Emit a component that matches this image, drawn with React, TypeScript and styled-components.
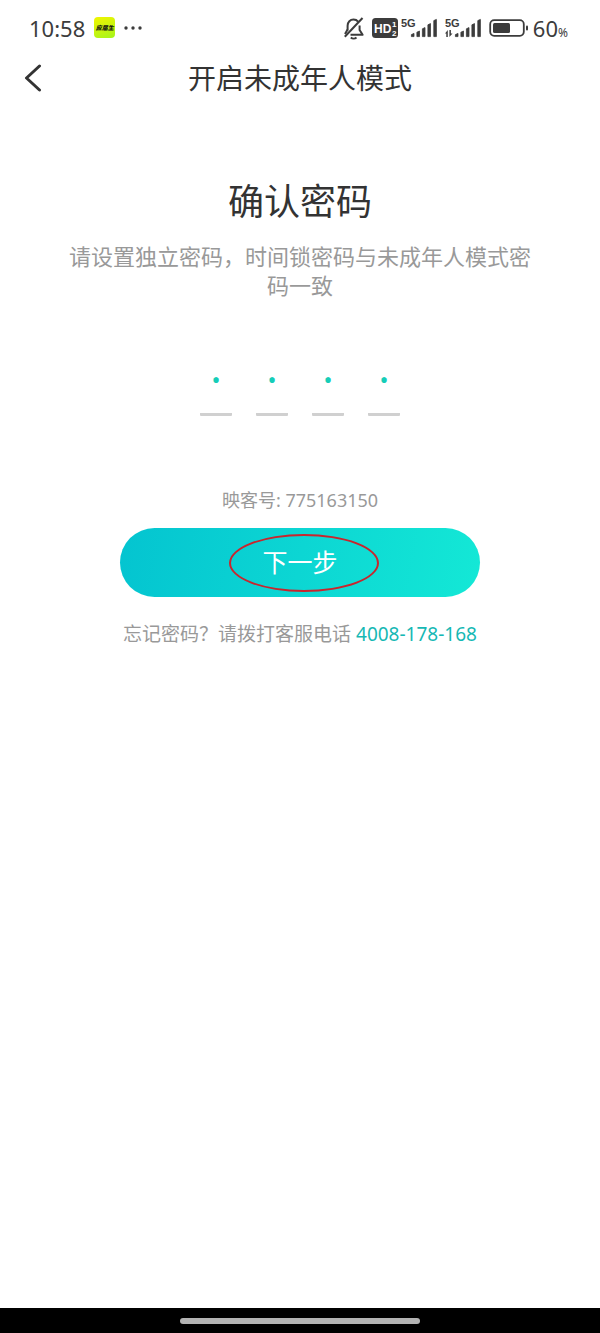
import React, { useState } from "react";
import styled, { createGlobalStyle } from "styled-components";

const GlobalStyle = createGlobalStyle`
  * { box-sizing: border-box; }
  body {
    margin: 0;
    background: #fff;
    color: #333;
    font-family: "Noto Sans", "Noto Sans CJK SC", sans-serif;
  }
`;

const Screen = styled.div`
  display: flex;
  flex-direction: column;
  min-height: 100vh;
`;

const StatusBar = styled.div`
  display: flex;
  align-items: center;
  justify-content: space-between;
  height: 55px;
  padding: 0 32px 0 29px;
  color: #3c3c3c;
`;

const StatusGroup = styled.div<{ $gap: number }>`
  display: flex;
  align-items: center;
  gap: ${(p) => p.$gap}px;

  svg { display: block; }
`;

const StatusText = styled.span`
  font-size: 22px;
  line-height: 24px;
`;

const Percent = styled.small`
  font-size: 12px;
  line-height: 12px;
`;

const AppBadge = styled.span`
  display: flex;
  align-items: center;
  justify-content: center;
  width: 21px;
  height: 21px;
  border-radius: 4px;
  background: linear-gradient(160deg, #f2f500, #a4f51c);
  color: #111;
  font-size: 6px;
  font-weight: 900;
  font-style: italic;
  line-height: 8px;
  white-space: nowrap;
`;

const NavBar = styled.header`
  display: grid;
  grid-template-columns: 64px 1fr 64px;
  align-items: center;
  height: 45px;
`;

const BackButton = styled.button`
  display: flex;
  align-items: center;
  height: 44px;
  padding: 0 0 0 24px;
  border: 0;
  background: none;
  color: #333;
`;

const NavTitle = styled.h1`
  margin: 0;
  font-size: 28px;
  font-weight: 400;
  line-height: 40px;
  text-align: center;
`;

const Content = styled.main`
  display: flex;
  flex: 1;
  flex-direction: column;
  align-items: center;
  padding: 78px 60px 0;
  text-align: center;
`;

const Heading = styled.h2`
  margin: 0;
  font-size: 36px;
  font-weight: 400;
  line-height: 48px;
`;

const Description = styled.p`
  margin: 16px 0 0;
  color: #999;
  font-size: 22px;
  line-height: 29px;
`;

const CodeRow = styled.div`
  display: flex;
  gap: 24px;
  margin-top: 60px;
`;

const CodeInput = styled.input`
  width: 32px;
  height: 56px;
  padding: 0 0 14px;
  border: 0;
  border-bottom: 3px solid #d0d0d0;
  border-radius: 1px;
  outline: 0;
  background: none;
  color: #16cdb8;
  font-family: "Noto Sans", sans-serif;
  font-size: 24px;
  text-align: center;
`;

const AccountId = styled.p`
  margin: 72px 0 0;
  color: #999;
  font-size: 18px;
  line-height: 24px;
`;

const Action = styled.div`
  position: relative;
  width: 75%;
  margin-top: 16px;
`;

const NextButton = styled.button`
  display: block;
  width: 100%;
  height: 69px;
  padding: 0 0 4px;
  border: 0;
  border-radius: 35px;
  background: linear-gradient(100deg, #04c4d0, #14e8d6);
  color: #fff;
  font-family: inherit;
  font-size: 25px;
`;

const Marker = styled.span`
  position: absolute;
  inset: 6px 101px 5px 109px;
  border: 2px solid #c9252d;
  border-radius: 50%;
  pointer-events: none;
`;

const Help = styled.p`
  margin: 25px 0 0;
  color: #999;
  font-size: 19px;
  line-height: 24px;
  white-space: nowrap;
`;

const PhoneLink = styled.a`
  color: #16b8b4;
  text-decoration: none;
`;

const GestureBar = styled.footer`
  display: flex;
  align-items: center;
  justify-content: center;
  height: 25px;
  background: #000;
`;

const GestureHandle = styled.span`
  width: 40%;
  height: 6px;
  border-radius: 3px;
  background: #b3b3b3;
`;

const MoreDots = () => (
  <svg width="18" height="4" viewBox="0 0 18 4" fill="currentColor" aria-hidden="true">
    <circle cx="2" cy="2" r="1.7" />
    <circle cx="9" cy="2" r="1.7" />
    <circle cx="16" cy="2" r="1.7" />
  </svg>
);

const MutedBell = () => (
  <svg width="22" height="24" viewBox="0 0 22 24" fill="none" stroke="currentColor" strokeWidth="2" aria-hidden="true">
    <path d="M4.6 14.5V9.8C4.6 6 7.2 3.6 10.5 3.6c1.9 0 3.5.7 4.6 2M16.6 9.5v4.5l3 4.8H7.5" strokeLinejoin="round" />
    <path d="M4.6 13.5L2 18" />
    <path d="M19.5 2L1.8 20.8" />
    <path d="M7.8 21.6c1.5 1.3 4.2 1.3 5.7 0" />
  </svg>
);

const HdBadge = () => (
  <svg width="26" height="20" viewBox="0 0 26 20" aria-hidden="true">
    <rect width="26" height="20" rx="3.5" fill="currentColor" />
    <g fill="#fff" fontFamily="Liberation Sans, sans-serif" fontWeight="700">
      <text x="2" y="14.5" fontSize="12">HD</text>
      <text x="20" y="9" fontSize="8">1</text>
      <text x="20" y="18" fontSize="8">2</text>
    </g>
  </svg>
);

const Signal = ({ data }: { data?: boolean }) => (
  <svg width="37" height="24" viewBox="0 0 37 24" fill="currentColor" aria-hidden="true">
    <text x="0" y="11" fontSize="11" fontWeight="700" fontFamily="Liberation Sans, sans-serif">5G</text>
    {data && <path d="M0 17.6L2.8 14v7H1.3v-3.4zM4.4 14h1.5v3.4h1.6L4.4 21z" />}
    <g strokeWidth="0.8" stroke="currentColor" strokeLinejoin="round">
      <path d="M10.4 18.6l2.6-1.2v3.2h-2.6zM15.9 16.2l2.6-1.2v5.6h-2.6zM21.4 12.8l2.6-1.2v9h-2.6zM26.9 8.8l2.6-1.2v13h-2.6zM32.8 4.6l2.6-1.2v17.2h-2.6z" />
    </g>
  </svg>
);

const Battery = () => (
  <svg width="40" height="18" viewBox="0 0 40 18" aria-hidden="true">
    <rect x="1.2" y="1.2" width="33.6" height="15.6" rx="4" fill="none" stroke="currentColor" strokeWidth="1.8" />
    <rect x="4" y="4" width="17" height="10" rx="1.5" fill="currentColor" />
    <rect x="37" y="6.5" width="2" height="5" rx="1" fill="currentColor" />
  </svg>
);

export default function App() {
  const [code, setCode] = useState(["1", "2", "3", "4"]);

  const update = (index: number, value: string) =>
    setCode(code.map((digit, i) => (i === index ? value : digit)));

  return (
    <>
      <GlobalStyle />
      <Screen>
        <StatusBar>
          <StatusGroup $gap={9}>
            <StatusText>10:58</StatusText>
            <AppBadge>应届生</AppBadge>
            <MoreDots />
          </StatusGroup>
          <StatusGroup $gap={7}>
            <MutedBell />
            <StatusGroup $gap={3}>
              <HdBadge />
              <Signal />
            </StatusGroup>
            <Signal data />
            <StatusGroup $gap={4}>
              <Battery />
              <StatusText>
                60<Percent>%</Percent>
              </StatusText>
            </StatusGroup>
          </StatusGroup>
        </StatusBar>

        <NavBar>
          <BackButton type="button" aria-label="返回">
            <svg width="18" height="28" viewBox="0 0 18 28" fill="none" stroke="currentColor" strokeWidth="3" strokeLinecap="round" strokeLinejoin="round">
              <path d="M15.5 2L2.5 14l13 12" />
            </svg>
          </BackButton>
          <NavTitle>开启未成年人模式</NavTitle>
        </NavBar>

        <Content>
          <Heading>确认密码</Heading>
          <Description>请设置独立密码，时间锁密码与未成年人模式密码一致</Description>

          <CodeRow>
            {code.map((digit, i) => (
              <CodeInput
                key={i}
                type="password"
                inputMode="numeric"
                maxLength={1}
                aria-label={`密码第${i + 1}位`}
                value={digit}
                onChange={(e) => update(i, e.target.value)}
              />
            ))}
          </CodeRow>

          <AccountId>映客号: 775163150</AccountId>
          <Action>
            <NextButton type="button">下一步</NextButton>
            <Marker />
          </Action>
          <Help>
            忘记密码？请拨打客服电话 <PhoneLink href="tel:4008178168">4008-178-168</PhoneLink>
          </Help>
        </Content>

        <GestureBar>
          <GestureHandle />
        </GestureBar>
      </Screen>
    </>
  );
}
